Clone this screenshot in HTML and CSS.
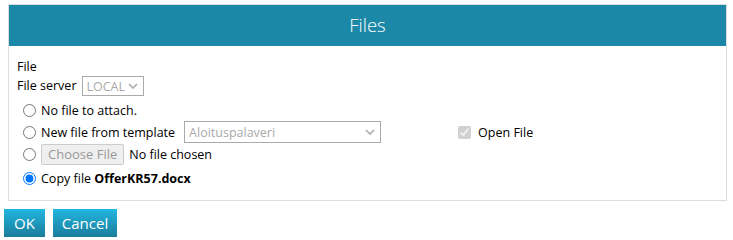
FILE: index.html
```html
<!DOCTYPE html>
<html lang="en">
<head>
    <meta charset="UTF-8">
    <title>Files</title>
    <link rel="stylesheet" href="styles.css">
</head>
<body>
    <div class="panel">
        <div class="panel-header">Files</div>
        <div class="panel-body">
            <div class="line">File</div>
            <div class="line server-row">
                <label for="server">File server</label>
                <span class="select-wrap small">
                    <select id="server" disabled>
                        <option>LOCAL</option>
                    </select>
                    <svg class="chevron" width="10" height="6" viewBox="0 0 10 6"><path d="M1 1l4 4 4-4" fill="none" stroke="currentColor" stroke-width="1.6"/></svg>
                </span>
            </div>
            <div class="radio-row first">
                <input type="radio" name="mode" id="none">
                <label for="none">No file to attach.</label>
            </div>
            <div class="radio-row">
                <input type="radio" name="mode" id="template">
                <label for="template">New file from template</label>
                <span class="select-wrap wide">
                    <select disabled>
                        <option>Aloituspalaveri</option>
                    </select>
                    <svg class="chevron" width="10" height="6" viewBox="0 0 10 6"><path d="M1 1l4 4 4-4" fill="none" stroke="currentColor" stroke-width="1.6"/></svg>
                </span>
                <span class="open-file">
                    <input type="checkbox" checked disabled>
                    <span>Open File</span>
                </span>
            </div>
            <div class="radio-row">
                <input type="radio" name="mode" id="upload">
                <span class="choose-btn">Choose File</span>
                <span class="no-file">No file chosen</span>
            </div>
            <div class="radio-row last">
                <input type="radio" name="mode" id="copy" checked>
                <label for="copy">Copy file <b>OfferKR57.docx</b></label>
            </div>
        </div>
    </div>
    <div class="actions">
        <button class="btn ok">OK</button>
        <button class="btn cancel">Cancel</button>
    </div>
</body>
</html>
```

FILE: styles.css
```css
body {
    margin: 0;
    font-family: 'Open Sans', 'Noto Sans', sans-serif;
    font-size: 12.5px;
    color: #000;
    background: #fff;
}
.panel {
    margin: 4px 6px 0 8px;
    border: 1px solid #ddd;
}
.panel-header {
    height: 41px;
    line-height: 40px;
    background-color: #1c88a8;
    color: #fff;
    text-align: center;
    font-size: 18.5px;
    font-weight: 300;
}
.panel-body {
    padding: 12px 8px 11px 8px;
}
.line {
    height: 18px;
    line-height: 18px;
}
.server-row {
    display: flex;
    align-items: center;
    gap: 5px;
    height: 20px;
    margin-bottom: 3px;
}
.select-wrap {
    position: relative;
    display: inline-block;
    color: #999;
}
.select-wrap select {
    appearance: none;
    -webkit-appearance: none;
    font-family: inherit;
    font-size: 12.5px;
    color: #aaa;
    background: #fff;
    border: 1px solid #aaa;
    border-radius: 0;
    padding: 0 4px;
    margin: 0;
    opacity: 1;
}
.select-wrap.small select {
    width: 62px;
    height: 20px;
}
.select-wrap.wide select {
    width: 197px;
    height: 22px;
}
.chevron {
    position: absolute;
    right: 6px;
    top: 50%;
    margin-top: -3px;
    color: #aaa;
}
.radio-row {
    display: flex;
    align-items: center;
    height: 22px;
}
.radio-row.last {
    margin-top: 2px;
}
.radio-row input[type="radio"] {
    width: 13px;
    height: 13px;
    margin: 0 5px 0 6px;
}
.radio-row label {
    margin-right: 9px;
}
.open-file {
    display: flex;
    align-items: center;
    margin-left: 77px;
}
.open-file input {
    width: 13px;
    height: 13px;
    margin: 0 7px 0 0;
}
.choose-btn {
    display: inline-block;
    height: 19px;
    line-height: 19px;
    padding: 0 6px;
    background: #efefef;
    border: 1px solid #ccc;
    border-radius: 2px;
    color: #999;
    font-size: 13px;
    margin-right: 5px;
}
.actions {
    display: flex;
    gap: 8px;
    margin: 8px 0 0 4px;
}
.btn {
    height: 28px;
    padding: 0;
    border: none;
    color: #fff;
    font-family: inherit;
    font-size: 15px;
    background: linear-gradient(to bottom, #22b6df, #1a7c9c);
    cursor: pointer;
}
.btn.ok {
    width: 41px;
}
.btn.cancel {
    width: 64px;
}
```
